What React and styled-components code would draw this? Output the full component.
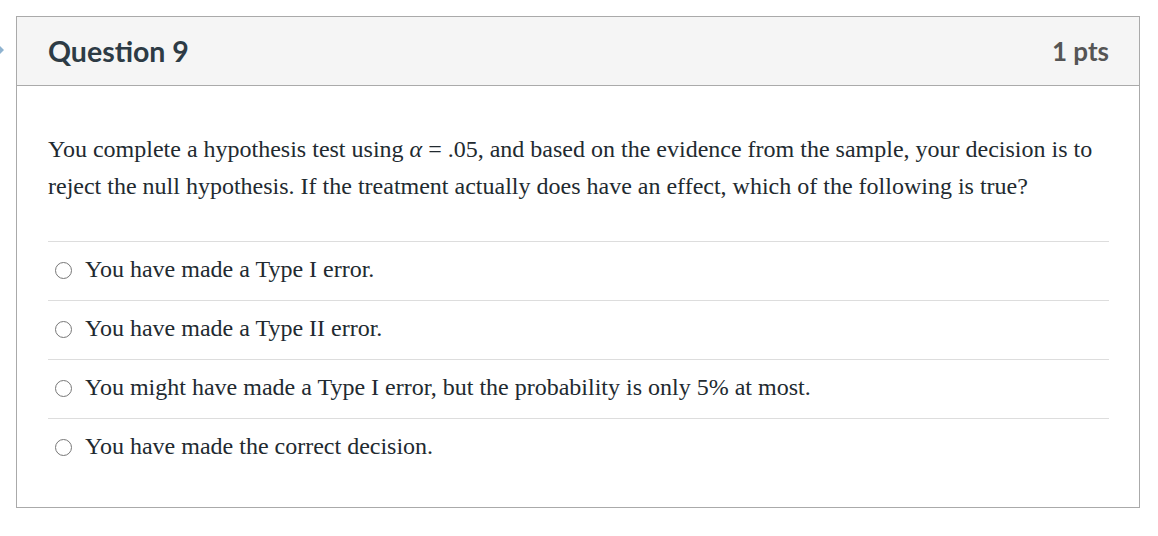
import React from 'react';
import styled, { createGlobalStyle } from 'styled-components';

const GlobalStyle = createGlobalStyle`
  body {
    margin: 0;
    background: #fff;
  }
`

const Page = styled.div`
  display: flex;
  flex-direction: row;
  padding-top: 16px;
  width: 1158px;
  height: 536px;
  box-sizing: border-box;
`
const Gutter = styled.div`
  width: 16px;
  flex-shrink: 0;
  padding-top: 25px;
`
const Panel = styled.div`
  width: 1124px;
  height: 492px;
  box-sizing: border-box;
  border: 1px solid #aaa;
  display: flex;
  flex-direction: column;
`
const Header = styled.div`
  display: flex;
  justify-content: space-between;
  align-items: center;
  height: 68px;
  padding: 0 30px 0 31px;
  background: #f5f5f5;
  border-bottom: 1px solid #aaa;
  font-family: Lato, "Liberation Sans", sans-serif;
  font-weight: 700;
`
const Title = styled.h2`
  margin: 0;
  font-size: 28.5px;
  font-weight: 700;
  color: #2d3b45;
`
const Points = styled.span`
  font-size: 26px;
  color: #555;
`
const Body = styled.div`
  padding: 45px 30px 0 31px;
  font-family: "Liberation Serif", "Times New Roman", serif;
  color: #222a30;
`
const Prompt = styled.p`
  margin: 0 0 36px;
  font-size: 24px;
  line-height: 37px;
`
const Answers = styled.div`
  display: flex;
  flex-direction: column;
`
const Answer = styled.label`
  display: flex;
  align-items: center;
  height: 54px;
  padding-bottom: 4px;
  border-top: 1px solid #ddd;
  font-size: 24px;
`
const Radio = styled.span`
  width: 15px;
  height: 15px;
  margin: 2px 13px 0 7px;
  border: 1.5px solid #777;
  border-radius: 50%;
  flex-shrink: 0;
`

const answers = [
  'You have made a Type I error.',
  'You have made a Type II error.',
  'You might have made a Type I error, but the probability is only 5% at most.',
  'You have made the correct decision.',
]

const App = () => {
  return (
    <>
      <GlobalStyle />
      <Page>
        <Gutter>
          <svg width="4" height="10" viewBox="0 0 4 10">
            <path d="M0 1 L4 5 L0 9 Z" fill="#8fb3d0" />
          </svg>
        </Gutter>
        <Panel>
          <Header>
            <Title>Question 9</Title>
            <Points>1 pts</Points>
          </Header>
          <Body>
            <Prompt>
              You complete a hypothesis test using <i>α</i> = .05, and based on the evidence from the sample, your decision is to reject the null hypothesis. If the treatment actually does have an effect, which of the following is true?
            </Prompt>
            <Answers>
              {answers.map((text) => (
                <Answer key={text}>
                  <Radio />
                  {text}
                </Answer>
              ))}
            </Answers>
          </Body>
        </Panel>
      </Page>
    </>
  )
}

export default App;
